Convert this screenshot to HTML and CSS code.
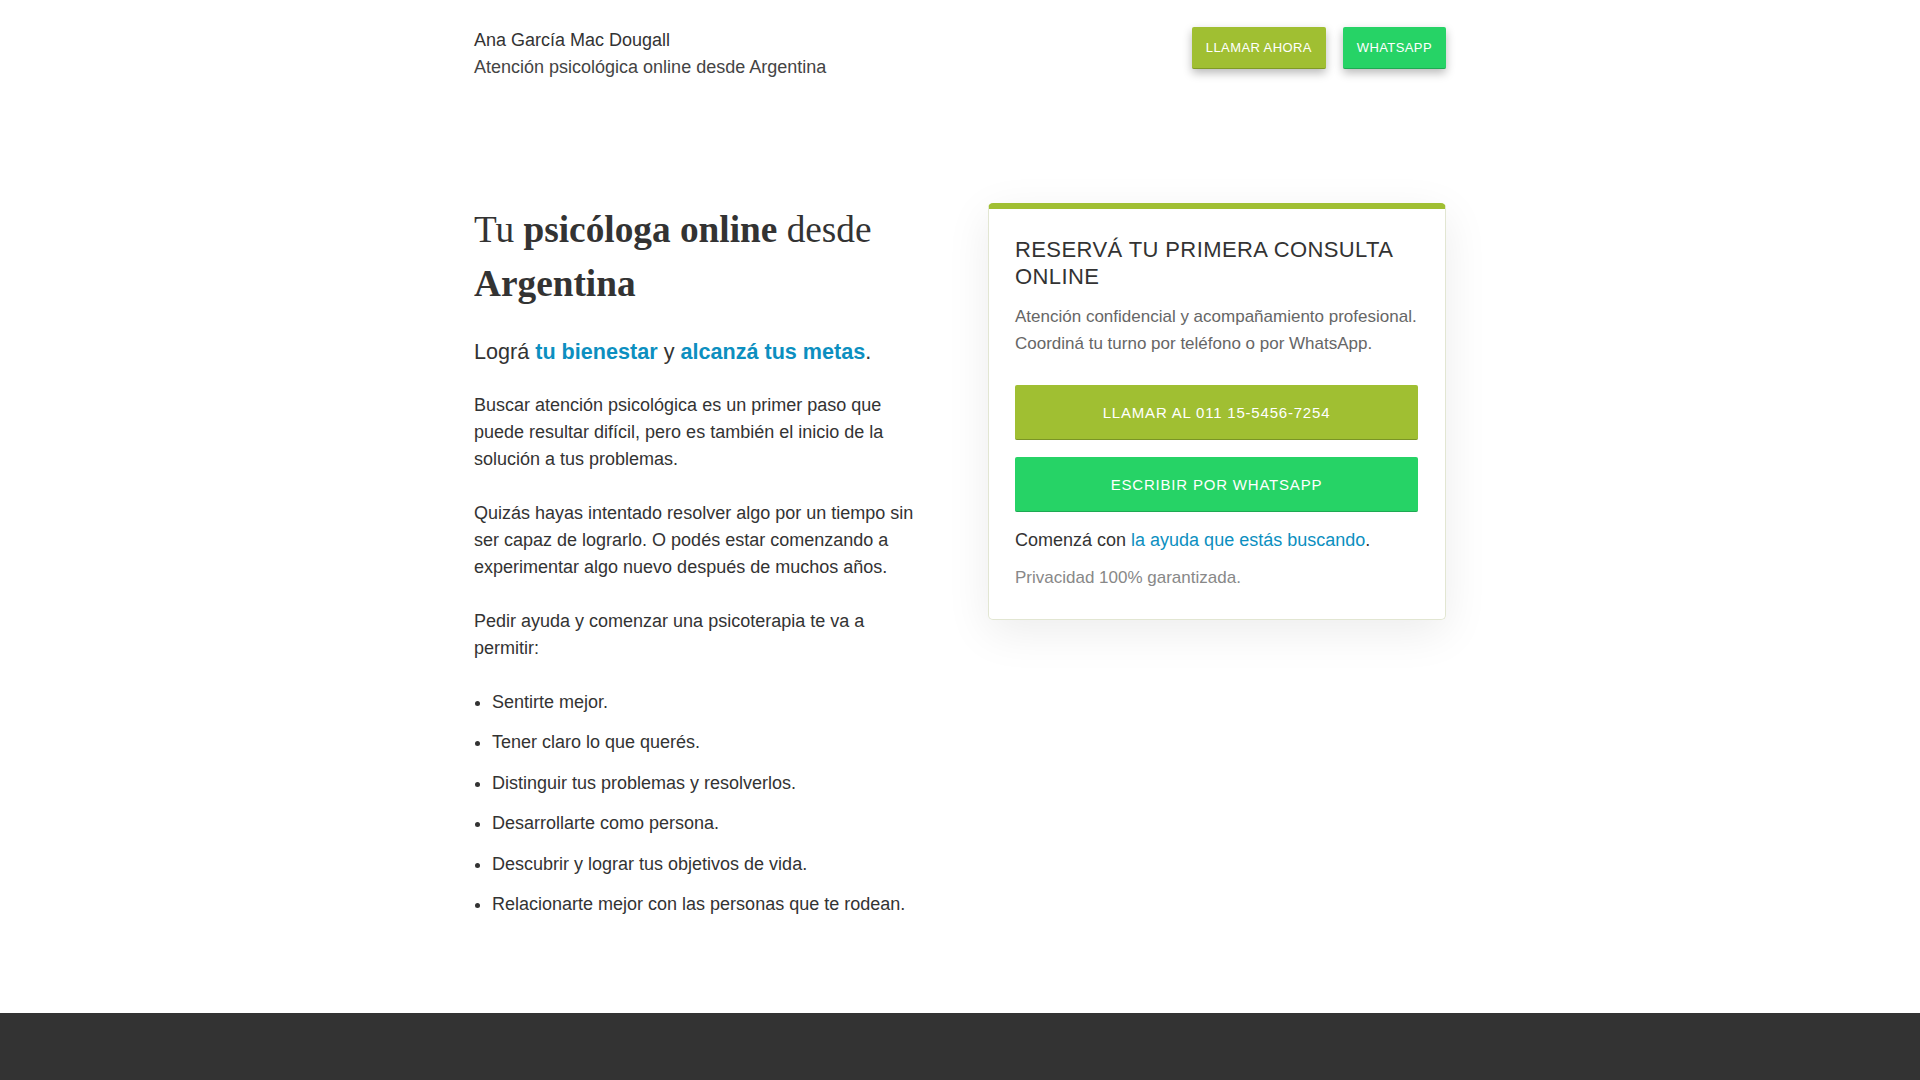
FILE: index.html
```html
<!DOCTYPE html>
<html lang="es">
<head>
<meta charset="utf-8">
<title>Ana García Mac Dougall</title>
<link rel="stylesheet" href="styles.css">
</head>
<body>
<header class="site-header">
  <div class="container header-inner">
    <div class="brand">
      <div class="brand-name">Ana García Mac Dougall</div>
      <div class="brand-tag">Atención psicológica online desde Argentina</div>
    </div>
    <nav class="header-actions">
      <a class="hbtn hbtn-call" href="#">LLAMAR AHORA</a>
      <a class="hbtn hbtn-wa" href="#">WHATSAPP</a>
    </nav>
  </div>
</header>
<main class="main">
  <div class="container main-grid">
    <section class="intro">
      <h1 class="title">Tu <strong>psicóloga online</strong> desde <strong>Argentina</strong></h1>
      <p class="lead">Lográ <a class="hl" href="#">tu bienestar</a> y <a class="hl" href="#">alcanzá tus metas</a>.</p>
      <p class="para">Buscar atención psicológica es un primer paso que puede resultar difícil, pero es también el inicio de la solución a tus problemas.</p>
      <p class="para">Quizás hayas intentado resolver algo por un tiempo sin ser capaz de lograrlo. O podés estar comenzando a experimentar algo nuevo después de muchos años.</p>
      <p class="para">Pedir ayuda y comenzar una psicoterapia te va a permitir:</p>
      <ul class="benefits">
        <li>Sentirte mejor.</li>
        <li>Tener claro lo que querés.</li>
        <li>Distinguir tus problemas y resolverlos.</li>
        <li>Desarrollarte como persona.</li>
        <li>Descubrir y lograr tus objetivos de vida.</li>
        <li>Relacionarte mejor con las personas que te rodean.</li>
      </ul>
    </section>
    <aside class="card">
      <h2 class="card-title">RESERVÁ TU PRIMERA CONSULTA ONLINE</h2>
      <p class="card-text">Atención confidencial y acompañamiento profesional. Coordiná tu turno por teléfono o por WhatsApp.</p>
      <a class="cbtn cbtn-call" href="#">LLAMAR AL 011 15-5456-7254</a>
      <a class="cbtn cbtn-wa" href="#">ESCRIBIR POR WHATSAPP</a>
      <p class="card-cta">Comenzá con <a class="link" href="#">la ayuda que estás buscando</a>.</p>
      <p class="card-note">Privacidad 100% garantizada.</p>
    </aside>
  </div>
</main>
<footer class="site-footer"></footer>
</body>
</html>
```
FILE: styles.css
```css
* { box-sizing: border-box; }
html, body { margin: 0; padding: 0; }
body {
  font-family: "Liberation Sans", Arial, sans-serif;
  color: #333;
  background: #fff;
  font-size: 18px;
  line-height: 27px;
  min-height: 1080px;
  display: flex;
  flex-direction: column;
}
a { text-decoration: none; }
.container { width: 972px; margin: 0 auto; }

.site-header { padding-top: 25px; }
.header-inner { display: flex; justify-content: space-between; align-items: flex-start; }
.brand { padding-top: 2px; }
.brand-name, .brand-tag { font-size: 18px; line-height: 27px; color: #333; }
.brand-tag { color: #444; }
.header-actions { display: flex; gap: 17px; padding-top: 2px; }
.hbtn {
  display: block;
  height: 42px;
  line-height: 42px;
  padding: 0 14px;
  font-size: 13px;
  letter-spacing: 0.4px;
  color: #fff;
  border-radius: 2px;
  box-shadow: 0 4px 10px rgba(0,0,0,0.28);
}
.hbtn-call { background: #a0bf32; border-bottom: 1px solid #7f9a25; }
.hbtn-wa { background: #26d366; border-bottom: 1px solid #1ea953; }

.main { flex: 1; padding-top: 122px; padding-bottom: 80px; }
.main-grid { display: grid; grid-template-columns: 458px 458px; column-gap: 56px; align-items: start; }

.title {
  font-family: "Liberation Serif", "Times New Roman", serif;
  font-weight: normal;
  font-size: 37.3px;
  line-height: 54px;
  margin: 0 0 23px;
  color: #333;
}
.title strong { font-weight: bold; }
.lead { font-size: 21.6px; line-height: 36px; margin: 0 0 22px; }
.hl { color: #0c8fc0; font-weight: bold; }
.para { margin: 0 0 27px; }
.benefits { margin: 0; padding-left: 18px; }
.benefits li { margin-bottom: 13.4px; }

.card {
  background: #fff;
  border: 1px solid #e2e6d2;
  border-top: 6px solid #a0bf32;
  border-radius: 5px;
  padding: 27px 27px 28px 26px;
  box-shadow: 0 12px 45px rgba(0,0,0,0.08);
}
.card-title {
  font-size: 22px;
  line-height: 27px;
  font-weight: normal;
  letter-spacing: 0.4px;
  margin: 0 0 13px;
  color: #333;
}
.card-text { color: #666; margin: 0 0 28px; font-size: 17px; }
.cbtn {
  display: block;
  height: 55px;
  line-height: 55px;
  text-align: center;
  color: #fff;
  font-size: 15px;
  letter-spacing: 0.8px;
  border-radius: 2px;
}
.cbtn-call { background: #a0bf32; border-bottom: 1px solid #7a9426; }
.cbtn-wa { background: #26d366; border-bottom: 1px solid #1ea953; margin-top: 17px; }
.card-cta { margin: 15px 0 10px; }
.link { color: #0c8fc0; }
.card-note { margin: 0; color: #888; font-size: 17px; }

.site-footer { background: #333; height: 67px; }
```
